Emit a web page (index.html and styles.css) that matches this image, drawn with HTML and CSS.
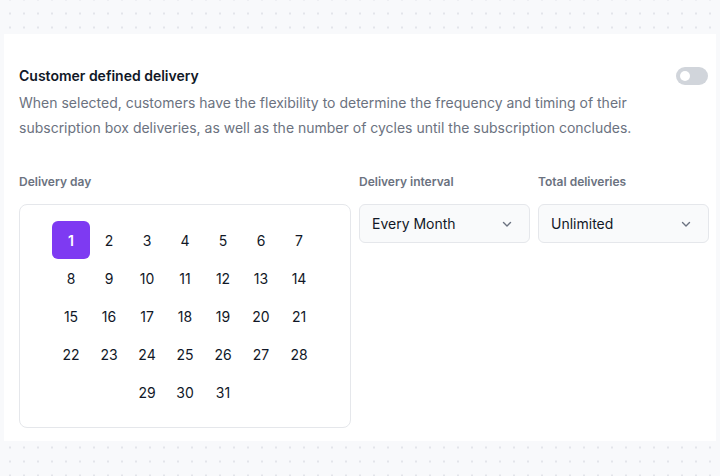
FILE: index.html
```html
<!DOCTYPE html>
<html>
<head>
<meta charset="utf-8">
<link rel="stylesheet" href="styles.css">
</head>
<body>
<div class="card">
  <div class="head">
    <h2 class="title">Customer defined delivery</h2>
    <span class="toggle"><span class="knob"></span></span>
  </div>
  <p class="desc">When selected, customers have the flexibility to determine the frequency and timing of their subscription box deliveries, as well as the number of cycles until the subscription concludes.</p>
  <div class="fields">
    <div class="field">
      <div class="label">Delivery day</div>
      <div class="calendar">
        <div class="days">
          <span class="day selected">1</span><span class="day">2</span><span class="day">3</span><span class="day">4</span><span class="day">5</span><span class="day">6</span><span class="day">7</span>
          <span class="day">8</span><span class="day">9</span><span class="day">10</span><span class="day">11</span><span class="day">12</span><span class="day">13</span><span class="day">14</span>
          <span class="day">15</span><span class="day">16</span><span class="day">17</span><span class="day">18</span><span class="day">19</span><span class="day">20</span><span class="day">21</span>
          <span class="day">22</span><span class="day">23</span><span class="day">24</span><span class="day">25</span><span class="day">26</span><span class="day">27</span><span class="day">28</span>
          <span class="day">29</span><span class="day">30</span><span class="day">31</span>
        </div>
      </div>
    </div>
    <div class="field">
      <div class="label">Delivery interval</div>
      <div class="select">
        <span>Every Month</span>
        <svg class="chev" width="12" height="12" viewBox="0 0 12 12"><path d="M2.5 4.5 L6 8 L9.5 4.5" fill="none" stroke="#6b7280" stroke-width="1.4" stroke-linecap="round" stroke-linejoin="round"/></svg>
      </div>
    </div>
    <div class="field">
      <div class="label">Total deliveries</div>
      <div class="select">
        <span>Unlimited</span>
        <svg class="chev" width="12" height="12" viewBox="0 0 12 12"><path d="M2.5 4.5 L6 8 L9.5 4.5" fill="none" stroke="#6b7280" stroke-width="1.4" stroke-linecap="round" stroke-linejoin="round"/></svg>
      </div>
    </div>
  </div>
</div>
</body>
</html>
```

FILE: styles.css
```css
html, body {
  margin: 0;
  padding: 0;
}
body {
  width: 720px;
  height: 476px;
  overflow: hidden;
  background-color: #f8f9fb;
  background-image: radial-gradient(circle at center, #e3e5ea 0.9px, transparent 1.3px);
  background-size: 14px 14px;
  background-position: 3px 6.5px;
  font-family: Inter, "Noto Sans", sans-serif;
  color: #111827;
  padding-top: 34px;
  box-sizing: border-box;
}
.card {
  margin-left: 4px;
  width: 712px;
  height: 407px;
  background: #fff;
  box-sizing: border-box;
  padding: 30px 7px 0 15px;
}
.head {
  display: flex;
  align-items: center;
  justify-content: space-between;
  height: 24px;
}
.title {
  margin: 0;
  font-size: 14px;
  font-weight: 600;
  line-height: 24px;
  color: #111827;
}
.toggle {
  width: 32px;
  height: 18px;
  border-radius: 9px;
  background: #d1d5db;
  display: flex;
  align-items: center;
  padding-left: 4px;
  box-sizing: border-box;
  margin-right: 1px;
}
.knob {
  width: 10px;
  height: 10px;
  border-radius: 50%;
  background: #fff;
}
.desc {
  margin: 2px 0 0;
  font-size: 14px;
  line-height: 25px;
  color: #6b7280;
}
.fields {
  display: grid;
  grid-template-columns: 332px 171px 171px;
  column-gap: 8px;
  margin-top: 34px;
}
.label {
  font-size: 12px;
  font-weight: 600;
  line-height: 16px;
  color: #6b7280;
  margin-bottom: 14px;
}
.calendar {
  border: 1px solid #e5e7eb;
  border-radius: 8px;
  padding: 16px 0;
  display: flex;
  justify-content: center;
}
.days {
  width: 266px;
  display: flex;
  flex-wrap: wrap;
  justify-content: center;
}
.day {
  width: 38px;
  height: 38px;
  display: flex;
  align-items: center;
  justify-content: center;
  font-size: 14px;
  color: #111827;
  border-radius: 6px;
}
.day.selected {
  background: #7e3af2;
  color: #fff;
  font-weight: 600;
}
.select {
  height: 39px;
  box-sizing: border-box;
  border: 1px solid #e5e7eb;
  border-radius: 6px;
  background: #f9fafb;
  display: flex;
  align-items: center;
  justify-content: space-between;
  padding: 0 16px 0 12px;
  font-size: 14px;
  color: #111827;
}
.chev {
  display: block;
}
```
